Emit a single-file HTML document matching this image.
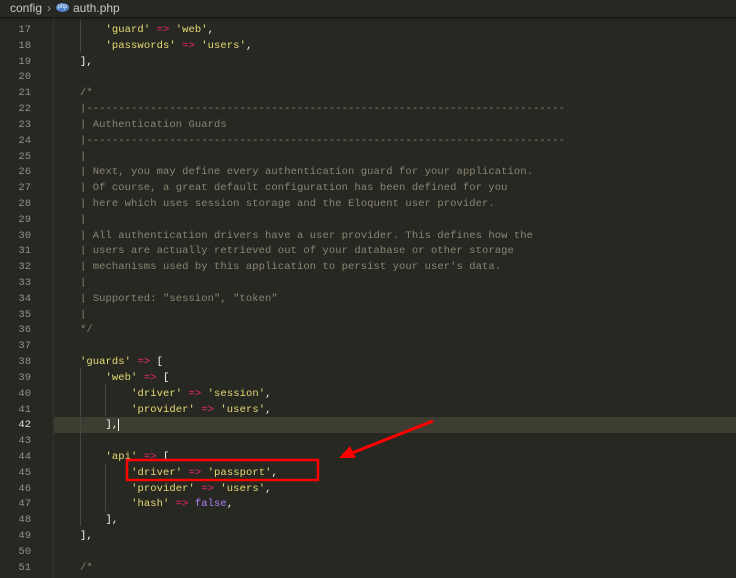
<!DOCTYPE html>
<html><head><meta charset="utf-8"><style>
html,body{margin:0;padding:0;width:736px;height:578px;overflow:hidden;background:#272822;}
.bar{position:absolute;left:0;top:0;width:736px;height:17px;background:#272822;font:12px "Liberation Sans",sans-serif;color:#c8c8c8;box-shadow:0 1px 3px #111;z-index:2}
.bar span{position:absolute;top:1px}
#code{position:absolute;left:0;top:23px;width:736px;font:10.5px/15.82px "Liberation Mono",monospace;letter-spacing:0.08px}
.l{position:relative;height:15.82px;white-space:pre}
.n{position:absolute;left:0;width:31px;text-align:right;color:#8f908a;letter-spacing:0}
.c{position:absolute;left:80px;color:#f8f8f2}
.s{color:#e6db74}.o{color:#f92672}.f{color:#ae81ff}.m{color:#8a8672}
.hl{position:absolute;left:54px;top:417px;width:682px;height:15.82px;background:#3e3d32}
.g{position:absolute;width:1px;background:#464741}
</style></head><body>
<div class="bar"><span style="left:10px">config</span><span style="left:47px;color:#999">›</span>
<span style="left:56px;top:3px;width:13px;height:9px;border-radius:50%;background:#4f82c8;font-size:6px;color:#fff;text-align:center;line-height:9px">php</span>
<span style="left:73px">auth.php</span></div>
<div class="hl"></div>
<div class="g" style="left:53px;top:17px;height:561px;background:#33342e"></div>
<div class="g" style="left:80px;top:20px;height:32px"></div>
<div class="g" style="left:80px;top:368px;height:158px"></div>
<div class="g" style="left:105px;top:384px;height:32px"></div>
<div class="g" style="left:105px;top:463px;height:48px"></div>
<div id="code">
<div class="l"><span class="n">17</span><span class="c">    <span class="s">'guard'</span> <span class="o">=&gt;</span> <span class="s">'web'</span>,</span></div>
<div class="l"><span class="n">18</span><span class="c">    <span class="s">'passwords'</span> <span class="o">=&gt;</span> <span class="s">'users'</span>,</span></div>
<div class="l"><span class="n">19</span><span class="c">],</span></div>
<div class="l"><span class="n">20</span></div>
<div class="l"><span class="n">21</span><span class="c m">/*</span></div>
<div class="l"><span class="n">22</span><span class="c m">|---------------------------------------------------------------------------</span></div>
<div class="l"><span class="n">23</span><span class="c m">| Authentication Guards</span></div>
<div class="l"><span class="n">24</span><span class="c m">|---------------------------------------------------------------------------</span></div>
<div class="l"><span class="n">25</span><span class="c m">|</span></div>
<div class="l"><span class="n">26</span><span class="c m">| Next, you may define every authentication guard for your application.</span></div>
<div class="l"><span class="n">27</span><span class="c m">| Of course, a great default configuration has been defined for you</span></div>
<div class="l"><span class="n">28</span><span class="c m">| here which uses session storage and the Eloquent user provider.</span></div>
<div class="l"><span class="n">29</span><span class="c m">|</span></div>
<div class="l"><span class="n">30</span><span class="c m">| All authentication drivers have a user provider. This defines how the</span></div>
<div class="l"><span class="n">31</span><span class="c m">| users are actually retrieved out of your database or other storage</span></div>
<div class="l"><span class="n">32</span><span class="c m">| mechanisms used by this application to persist your user's data.</span></div>
<div class="l"><span class="n">33</span><span class="c m">|</span></div>
<div class="l"><span class="n">34</span><span class="c m">| Supported: "session", "token"</span></div>
<div class="l"><span class="n">35</span><span class="c m">|</span></div>
<div class="l"><span class="n">36</span><span class="c m">*/</span></div>
<div class="l"><span class="n">37</span></div>
<div class="l"><span class="n">38</span><span class="c"><span class="s">'guards'</span> <span class="o">=&gt;</span> [</span></div>
<div class="l"><span class="n">39</span><span class="c">    <span class="s">'web'</span> <span class="o">=&gt;</span> [</span></div>
<div class="l"><span class="n">40</span><span class="c">        <span class="s">'driver'</span> <span class="o">=&gt;</span> <span class="s">'session'</span>,</span></div>
<div class="l"><span class="n">41</span><span class="c">        <span class="s">'provider'</span> <span class="o">=&gt;</span> <span class="s">'users'</span>,</span></div>
<div class="l"><span class="n" style="color:#e0e0e0">42</span><span class="c">    ],<span style="border-left:1px solid #f8f8f0"></span></span></div>
<div class="l"><span class="n">43</span></div>
<div class="l"><span class="n">44</span><span class="c">    <span class="s">'api'</span> <span class="o">=&gt;</span> [</span></div>
<div class="l"><span class="n">45</span><span class="c">        <span class="s">'driver'</span> <span class="o">=&gt;</span> <span class="s">'passport'</span>,</span></div>
<div class="l"><span class="n">46</span><span class="c">        <span class="s">'provider'</span> <span class="o">=&gt;</span> <span class="s">'users'</span>,</span></div>
<div class="l"><span class="n">47</span><span class="c">        <span class="s">'hash'</span> <span class="o">=&gt;</span> <span class="f">false</span>,</span></div>
<div class="l"><span class="n">48</span><span class="c">    ],</span></div>
<div class="l"><span class="n">49</span><span class="c">],</span></div>
<div class="l"><span class="n">50</span></div>
<div class="l"><span class="n">51</span><span class="c m">/*</span></div>
</div>
<svg style="position:absolute;left:0;top:0" width="736" height="578">
<rect x="127" y="460" width="191" height="20" fill="none" stroke="#ff0000" stroke-width="2.5"/>
<line x1="433" y1="421" x2="352" y2="453" stroke="#ff0000" stroke-width="3"/>
<polygon points="339,458 350,446 356,458" fill="#ff0000"/>
</svg>
</body></html>
